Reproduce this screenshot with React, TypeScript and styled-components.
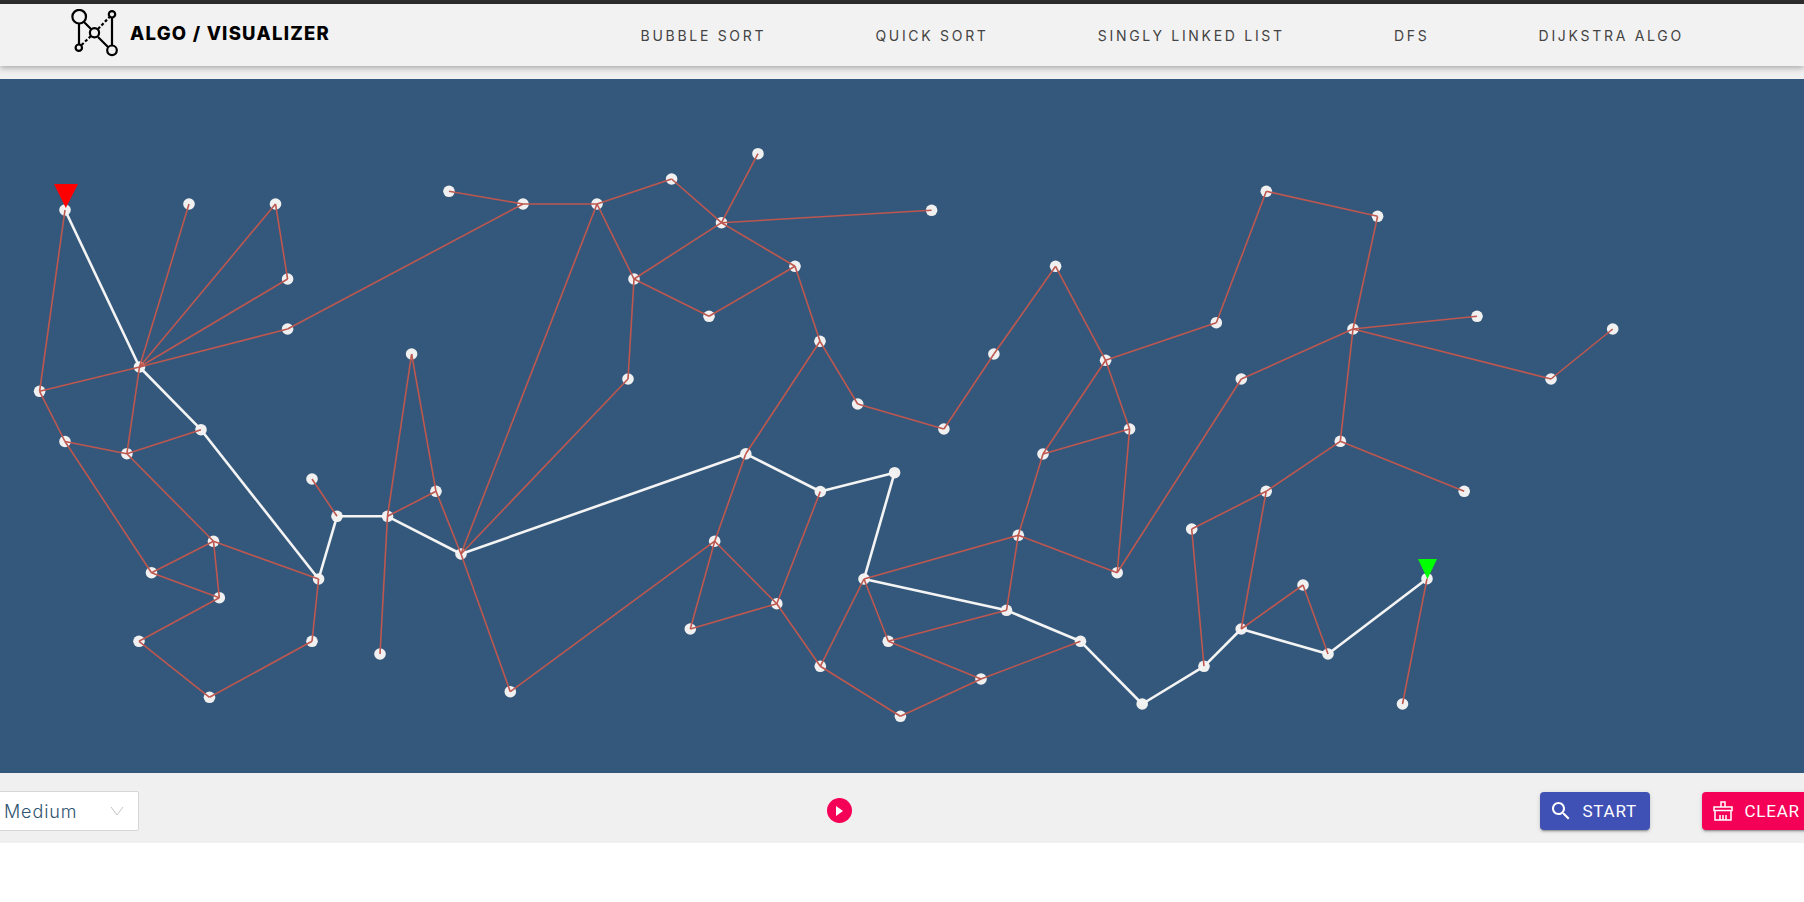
import styled, { createGlobalStyle } from 'styled-components'

const nodes: Record<string, [number, number]> = {
  s: [65, 210], a: [139.5, 367], b: [189, 204], c: [275.5, 204], d: [287.6, 279], e: [287.6, 329],
  f: [39.6, 391.3], g: [201, 429.7], h: [65, 441.5], i: [126.9, 453.7], j: [213.5, 541.3], k: [151.5, 572.7],
  l: [318.6, 579], m: [219.3, 597.7], n: [139, 641.3], o: [312, 641.3], p: [209.5, 697.3], q: [312, 479],
  r: [337, 516.3], t: [387.5, 516.3], u: [411.6, 354], v: [436, 491.3], w: [461, 554], x: [380, 654],
  y: [510.3, 691.7], z: [449, 191.3], A: [523, 204], B: [597, 204], C: [671.6, 179], D: [758, 153.7],
  E: [721.5, 222.7], F: [931.6, 210.3], G: [795, 266.3], H: [634, 279], I: [709, 316.3], J: [820, 341.3],
  K: [628, 379], L: [857.7, 404], M: [943.9, 429], N: [993.9, 354], O: [1055.6, 266.3], P: [1105.6, 360.3],
  Q: [1216.3, 322.7], R: [1266.3, 191.3], S: [1377.6, 216.3], T: [1353, 329], U: [1477, 316.3], V: [1612.7, 329],
  W: [1551, 379], X: [1241.3, 379], Y: [1340.3, 441.3], Z: [1464.2, 491.3], aa: [1266.2, 491.3], ab: [1191.7, 529],
  ac: [1204, 666.3], ad: [1241.2, 629], ae: [1303, 585], af: [1328, 654], ag: [1427, 578.7], ah: [1402.5, 704],
  ai: [1142.2, 704], aj: [1080.5, 641.3], ak: [1006.5, 610.3], al: [1018.3, 535.3], am: [1043, 454], an: [1129.6, 429],
  ao: [1117.2, 572.7], ap: [864, 579], aq: [894.6, 472.7], ar: [820.3, 491.5], as: [745.8, 453.8], at: [714.7, 541.2],
  au: [776.8, 603.7], av: [690.3, 629], aw: [820.3, 666.3], ax: [900.4, 716.3], ay: [981, 679], az: [888.3, 641.3],
}

const redEdges = `s-f a-b a-c a-d a-e a-f a-i c-d e-A f-h h-i i-g h-k i-j j-k j-m k-m j-l m-n n-p p-o o-l
q-r t-u u-v v-t v-w t-x w-B w-K w-y y-at z-A A-B B-C C-E D-E E-F B-H H-E E-G H-I I-G G-J H-K J-L L-M M-N N-O
O-P P-Q Q-R R-S S-T T-U T-W W-V T-X T-Y Y-Z Y-aa X-ao aa-ab ab-ac aa-ad ad-ae ae-af ag-ah P-am P-an am-an an-ao
am-al al-ao al-ap al-ak ak-az az-ay ay-aj ap-az ap-aw aw-ax ax-ay as-J as-at ar-au at-av av-au at-au au-aw`
  .split(/\s+/)

const pathEdges = `s-a a-g g-l l-r r-t t-w w-as as-ar ar-aq aq-ap ap-ak ak-aj aj-ai ai-ac ac-ad ad-af af-ag`.split(' ')

const navItems = ['Bubble Sort', 'Quick Sort', 'Singly Linked List', 'DFS', 'Dijkstra Algo']

const GlobalStyle = createGlobalStyle`
  * { box-sizing: border-box; }
  html, body {
    margin: 0;
    background: #fff;
    overflow: hidden;
    font-family: "Roboto", "Liberation Sans", sans-serif;
  }
`

const Page = styled.div`
  width: 1804px;
  overflow: hidden;
`

const TopStrip = styled.div`
  height: 4px;
  background: #2e2e2e;
`

const Header = styled.header`
  height: 62px;
  display: flex;
  align-items: center;
  padding-left: 71px;
  background: #f2f2f2;
  box-shadow: 0 2px 6px rgba(0, 0, 0, 0.3);
  position: relative;
`

const Brand = styled.div`
  display: flex;
  align-items: center;
  gap: 12px;
  width: 515px;
  margin-top: -4px;
`

const BrandName = styled.span`
  font-family: "Inter", "Liberation Sans", sans-serif;
  font-weight: 800;
  font-size: 18.5px;
  letter-spacing: 1.25px;
  color: #000;
  white-space: nowrap;
`

const Nav = styled.nav`
  display: flex;
`

const NavLink = styled.a`
  padding: 0 54.6px;
  font-family: "Inter", "Liberation Sans", sans-serif;
  font-size: 14px;
  font-weight: 400;
  letter-spacing: 2.7px;
  text-transform: uppercase;
  color: #444;
  white-space: nowrap;
`

const Spacer = styled.div`
  height: 13px;
  background: #f0f0f0;
`

const GraphPanel = styled.svg`
  display: block;
  width: 1804px;
  height: 694px;
  background: #34587b;
`

const Controls = styled.div`
  height: 70px;
  padding-top: 6px;
  display: flex;
  align-items: center;
  gap: 688px;
  background: #f0f0f0;
`

const SpeedSelect = styled.div`
  flex: none;
  width: 158.5px;
  height: 40px;
  margin-left: -20px;
  padding: 0 14px 0 23px;
  display: flex;
  align-items: center;
  justify-content: space-between;
  background: #fff;
  border: 1px solid #d6d6d6;
  border-radius: 2px;
  font-family: "Inter", sans-serif;
  font-weight: 300;
  font-size: 18px;
  letter-spacing: 0.9px;
  color: #2f5470;
`

const PlayButton = styled.button`
  flex: none;
  width: 25px;
  height: 25px;
  margin-top: -1px;
  padding: 0;
  border: 0;
  border-radius: 50%;
  display: flex;
  align-items: center;
  justify-content: center;
  background: #f50057;
`

const Actions = styled.div`
  flex: none;
  display: flex;
  gap: 52px;
`

const ActionButton = styled.button<{ $bg: string; $width: number }>`
  flex: none;
  width: ${(p) => p.$width}px;
  height: 38px;
  display: flex;
  align-items: center;
  gap: 10px;
  padding: 0 0 0 9px;
  border: 0;
  border-radius: 4px;
  background: ${(p) => p.$bg};
  color: #fff;
  font-family: "Roboto", sans-serif;
  font-size: 17px;
  letter-spacing: 0.75px;
  text-transform: uppercase;
  box-shadow: 0 3px 1px -2px rgba(0, 0, 0, 0.2), 0 2px 2px 0 rgba(0, 0, 0, 0.14), 0 1px 5px 0 rgba(0, 0, 0, 0.12);
`

const Logo = () => (
  <svg width="47" height="48" viewBox="71 10 47 48" fill="none" stroke="#000" strokeWidth="2.2">
    <path d="M84 23L91 30M79 25V45M98 38L108.5 48.5M112 19V46" />
    <path d="M81.5 46L91 37M98 30L109.5 18" strokeDasharray="3 2" />
    <circle cx="79.2" cy="17.7" r="6.8" />
    <circle cx="112" cy="15.3" r="3.2" />
    <circle cx="94.5" cy="33.7" r="4.6" />
    <circle cx="78.8" cy="48.7" r="3.2" />
    <circle cx="112" cy="51.3" r="4.8" />
  </svg>
)

const SearchIcon = () => (
  <svg width="24" height="24" viewBox="0 0 24 24" fill="#fff">
    <path d="M15.5 14h-.79l-.28-.27C15.41 12.59 16 11.11 16 9.5 16 5.91 13.09 3 9.5 3S3 5.91 3 9.5 5.91 16 9.5 16c1.61 0 3.09-.59 4.23-1.57l.27.28v.79l5 4.99L20.49 19l-4.99-5zm-6 0C7.01 14 5 11.99 5 9.5S7.01 5 9.5 5 14 7.01 14 9.5 11.99 14 9.5 14z" />
  </svg>
)

const BroomIcon = () => (
  <svg width="24" height="24" viewBox="-2 -2 24 24" fill="none" stroke="#fff" strokeWidth="1.5">
    <path d="M8 6V1h4v5M1 6h18v3.5H1zM2 9.5V19h16V9.5M7 19v-5M10 19v-5M13 19v-5" />
  </svg>
)

const Line = ({ id, color, width }: { id: string; color: string; width: number }) => {
  const [from, to] = id.split('-')
  const [x1, y1] = nodes[from]
  const [x2, y2] = nodes[to]
  return <line x1={x1} y1={y1} x2={x2} y2={y2} stroke={color} strokeWidth={width} />
}

const App = () => {
  return (
    <Page>
      <GlobalStyle />
      <TopStrip />
      <Header>
        <Brand>
          <Logo />
          <BrandName>ALGO / VISUALIZER</BrandName>
        </Brand>
        <Nav>
          {navItems.map((item) => (
            <NavLink key={item}>{item}</NavLink>
          ))}
        </Nav>
      </Header>
      <Spacer />
      <GraphPanel viewBox="0 79 1804 694">
        {Object.entries(nodes).map(([id, [x, y]]) => (
          <circle key={id} cx={x} cy={y} r="5.8" fill="#f0f0f0" />
        ))}
        {pathEdges.map((id) => (
          <Line key={id} id={id} color="#f4f4f4" width={2.6} />
        ))}
        {redEdges.map((id) => (
          <Line key={id} id={id} color="#bd574f" width={1.6} />
        ))}
        <polygon points="54,184 78,184 65.8,208" fill="#ff0000" />
        <polygon points="1418,559 1437,559 1427.5,579" fill="#00ff00" />
      </GraphPanel>
      <Controls>
        <SpeedSelect>
          Medium
          <svg width="14" height="10" viewBox="0 0 14 10" fill="none" stroke="#c4c4c4" strokeWidth="1">
            <path d="M1 1l6 8 6-8" />
          </svg>
        </SpeedSelect>
        <PlayButton aria-label="play">
          <svg width="10" height="10" viewBox="0 0 10 10" fill="#fff">
            <path d="M2 0l7 5-7 5z" />
          </svg>
        </PlayButton>
        <Actions>
          <ActionButton $bg="#3f51b5" $width={110}>
            <SearchIcon />
            Start
          </ActionButton>
          <ActionButton $bg="#f50057" $width={112}>
            <BroomIcon />
            Clear
          </ActionButton>
        </Actions>
      </Controls>
    </Page>
  )
}

export default App
